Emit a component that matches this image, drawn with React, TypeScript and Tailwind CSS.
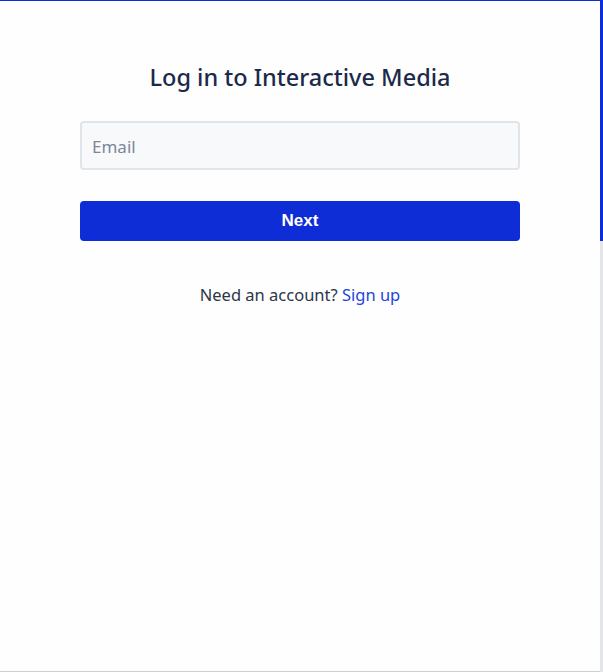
import React from "react";

const App = () => {
  return (
    <div className="flex h-[672px] w-full bg-white font-['Noto_Sans',sans-serif]">
      <main className="flex flex-1 flex-col items-center border-t border-b border-t-[#0e2dd6] border-b-[#cfd0d6] bg-[#fefefe]">
        <div className="flex w-[440px] flex-col items-center pt-[60px]">
          <h1 className="text-[23.5px] leading-8 font-medium text-[#1b2a4a]">
            Log in to Interactive Media
          </h1>
          <input
            type="email"
            placeholder="Email"
            className="mt-[28px] h-[49px] w-full rounded border-2 border-[#e1e4e9] bg-[#f8f9fb] px-[10px] pt-[2px] text-[17px] text-[#1b2a4a] placeholder:text-[#7d8699] outline-none"
          />
          <button className="mt-[31px] h-10 w-full rounded bg-[#0e2dd6] font-['Liberation_Sans',sans-serif] text-[17px] font-semibold text-white">
            Next
          </button>
          <p className="mt-[42px] text-[16.5px] leading-6 text-[#2b3649]">
            Need an account? <a href="#" className="text-[#1f44e0]">Sign up</a>
          </p>
        </div>
      </main>
      <div className="flex w-[3px] flex-col">
        <div className="h-[241px] bg-[#0e2dd6]" />
        <div className="flex-1 bg-[#e3e5e9]" />
      </div>
    </div>
  );
};

export default App;
